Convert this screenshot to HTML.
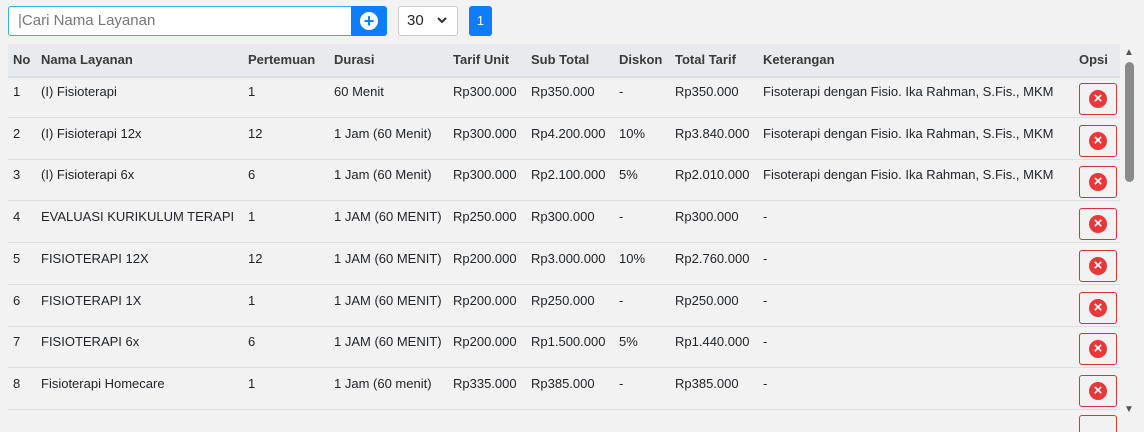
<!DOCTYPE html>
<html style="overflow:hidden;height:432px"><head><style>
body{margin:0;width:1144px;height:432px;overflow:hidden;background:#f2f2f2;font-family:"Liberation Sans",sans-serif;font-size:13px;color:#212529;position:relative}
.a{position:absolute;white-space:nowrap}
.inp{left:8px;top:6px;width:342px;height:28px;border:1px solid #2fb8d6;background:#fff;border-radius:3px 0 0 3px}
.btn{left:351px;top:6px;width:36px;height:30px;background:#0d7dfb;border-radius:0 3px 3px 0}
.sel{left:398px;top:6px;width:58px;height:28px;border:1px solid #ccc;background:#fff;border-radius:3px}
.pg{left:469px;top:6px;width:23px;height:30px;background:#0d7dfb;border-radius:3px;color:#fff;text-align:center;line-height:30px}
.hd{left:8px;top:44px;width:1112px;height:32px;background:#e8eaed;border-bottom:2px solid #dcdee1}
.th{font-weight:bold;color:#3a3a3a;top:52px}
.ln{left:8px;width:1112px;height:1px;background:#dcdee1}
.x{width:36px;height:30px;border:1px solid #e03040;border-radius:3px;left:1079px}
.x:after{content:"×";position:absolute;left:9px;top:6px;width:18px;height:18px;border-radius:50%;background:#e8383a;color:#fff;font-weight:bold;font-size:15px;line-height:17px;text-align:center}
</style></head><body>
<div class="a inp"></div><div class="a" style="left:18px;top:12px;font-size:15px;color:#777">|Cari Nama Layanan</div>
<div class="a btn"><div style="position:absolute;left:9px;top:6px;width:18px;height:18px;border-radius:50%;background:#fff;color:#0d7dfb;font-weight:bold;font-size:18px;line-height:18px;text-align:center">+</div></div>
<div class="a sel"></div><div class="a" style="left:407px;top:12px;font-size:15px">30</div>
<svg class="a" style="left:437px;top:17px" width="10" height="7" viewBox="0 0 10 7"><path d="M1 1l4 4 4-4" stroke="#333" stroke-width="2" fill="none"/></svg>
<div class="a pg">1</div>
<div class="a hd"></div>
<div class="a th" style="left:13px">No</div><div class="a th" style="left:41px">Nama Layanan</div><div class="a th" style="left:248px">Pertemuan</div><div class="a th" style="left:334px">Durasi</div><div class="a th" style="left:453px">Tarif Unit</div><div class="a th" style="left:531px">Sub Total</div><div class="a th" style="left:619px">Diskon</div><div class="a th" style="left:675px">Total Tarif</div><div class="a th" style="left:763px">Keterangan</div><div class="a th" style="left:1079px">Opsi</div>
<div id="r"></div>
<script>
var d=[["1","(I) Fisioterapi","1","60 Menit","Rp300.000","Rp350.000","-","Rp350.000","Fisoterapi dengan Fisio. Ika Rahman, S.Fis., MKM"],
["2","(I) Fisioterapi 12x","12","1 Jam (60 Menit)","Rp300.000","Rp4.200.000","10%","Rp3.840.000","Fisoterapi dengan Fisio. Ika Rahman, S.Fis., MKM"],
["3","(I) Fisioterapi 6x","6","1 Jam (60 Menit)","Rp300.000","Rp2.100.000","5%","Rp2.010.000","Fisoterapi dengan Fisio. Ika Rahman, S.Fis., MKM"],
["4","EVALUASI KURIKULUM TERAPI","1","1 JAM (60 MENIT)","Rp250.000","Rp300.000","-","Rp300.000","-"],
["5","FISIOTERAPI 12X","12","1 JAM (60 MENIT)","Rp200.000","Rp3.000.000","10%","Rp2.760.000","-"],
["6","FISIOTERAPI 1X","1","1 JAM (60 MENIT)","Rp200.000","Rp250.000","-","Rp250.000","-"],
["7","FISIOTERAPI 6x","6","1 JAM (60 MENIT)","Rp200.000","Rp1.500.000","5%","Rp1.440.000","-"],
["8","Fisioterapi Homecare","1","1 Jam (60 menit)","Rp335.000","Rp385.000","-","Rp385.000","-"]];
var xs=[13,41,248,334,453,531,619,675,763],h="";
d.forEach(function(r,i){var y=76+i*41.7;r.forEach(function(c,j){h+='<div class="a" style="left:'+xs[j]+'px;top:'+(y+8)+'px">'+c+'</div>'});
h+='<div class="a x" style="top:'+(y+7)+'px"></div><div class="a ln" style="top:'+(y+41)+'px"></div>'});
document.getElementById('r').innerHTML=h;
</script>
<div class="a" style="left:1079px;top:415px;width:36px;height:17px;border:1px solid #e03040;border-bottom:none;border-radius:3px 3px 0 0"></div>
<div class="a" style="left:1121px;top:44px;width:15px;height:380px;background:#f2f2f2"></div>
<div class="a" style="left:1125px;top:62px;width:9px;height:120px;background:#8a8a8a;border-radius:5px"></div>
<div class="a" style="left:1124px;top:47px;font-size:10px;color:#555">▲</div>
<div class="a" style="left:1124px;top:404px;font-size:10px;color:#555">▼</div>
</body></html>
